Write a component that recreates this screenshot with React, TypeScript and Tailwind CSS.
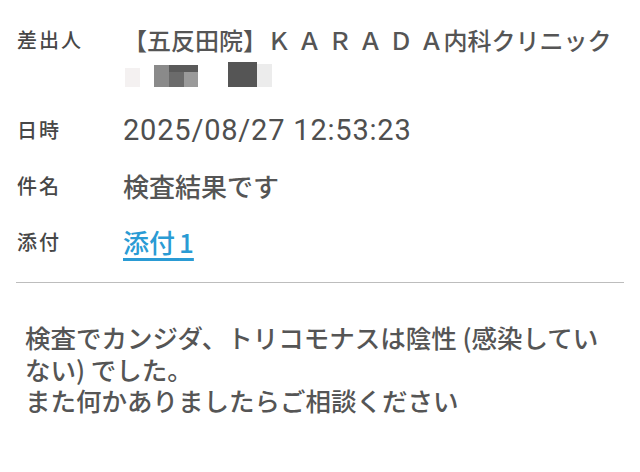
const font = { fontFamily: '"Noto Sans CJK JP", Roboto, sans-serif' };

function Blurred() {
  // pixelated (mosaic) name on the second sender line
  return (
    <div className="flex h-[34px] items-end pb-[4px]">
      <div className="ml-[2px] h-[19px] w-[15px] bg-[#f4f1f1]" />
      <div className="ml-[14px] h-[22px] w-[15px] bg-[#8a8a8a]" />
      <div className="flex h-[22px] w-[29px] flex-col">
        <div className="h-[7px] bg-[#5a5a5a]" />
        <div className="flex flex-1">
          <div className="w-[15px] bg-[#6b6b6b]" />
          <div className="flex-1 bg-[#9a9a9a]" />
        </div>
      </div>
      <div className="ml-[30px] h-[25px] w-[29px] bg-[#555555]" />
      <div className="h-[23px] w-[15px] bg-[#ececec]" />
    </div>
  );
}

function Row({ label, children }: { label: string; children: React.ReactNode }) {
  return (
    <div className="flex">
      <div className="w-[106px] shrink-0 text-[20px] font-medium leading-[34px] tracking-[2px] text-[#474747]">{label}</div>
      <div className="min-w-0 flex-1">{children}</div>
    </div>
  );
}

export default function App() {
  return (
    <div className="h-[472px] w-[640px] overflow-hidden bg-white font-medium" style={font}>
      <div className="flex flex-col gap-[22px] pl-[17px] pr-[10px] pt-[23px]">
        <Row label="差出人">
          <div className="whitespace-nowrap text-[24px] leading-[34px] text-[#555555]">
            【五反田院】<span className="tracking-[6.5px]">ＫＡＲＡＤ</span>Ａ内科クリニック
          </div>
          <Blurred />
        </Row>
        <Row label="日時">
          <div
            className="text-[29px] font-normal leading-[34px] tracking-[0.8px] text-[#4f4f4f]"
            style={{ fontFamily: 'Roboto, "Noto Sans CJK JP", sans-serif' }}
          >
            2025/08/27 12:53:23
          </div>
        </Row>
        <Row label="件名">
          <div className="text-[26px] leading-[34px] text-[#555555]">検査結果です</div>
        </Row>
        <Row label="添付">
          <a
            href="#"
            className="text-[26px] leading-[34px] text-[#2a9bd4] underline decoration-[3px] underline-offset-[5px]"
          >
            添<span className="tracking-[4px]">付</span>1
          </a>
        </Row>
      </div>

      <div className="mx-[16px] mt-[23px] h-px bg-[#bdbdbd]" />

      <div className="pl-[25px] pr-[28px] pt-[38px] text-[25.5px] leading-[31.5px] text-[#555555]">
        <p>検査でカンジダ、トリコモナスは陰性 (感染していない) でした。</p>
        <p>また何かありましたらご相談ください</p>
      </div>
    </div>
  );
}
